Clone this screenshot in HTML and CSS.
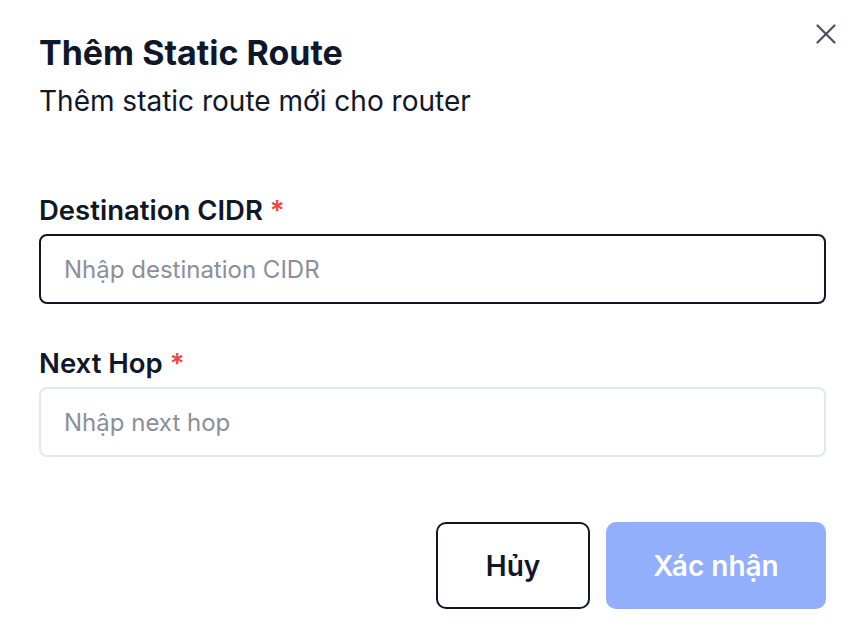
FILE: index.html
```html
<!DOCTYPE html>
<html lang="vi">

<head>
    <meta charset="UTF-8">
    <title>Thêm Static Route</title>
    <meta name="viewport" content="width=device-width, initial-scale=1">
    <link rel="stylesheet" href="styles.css">
</head>

<body>
    <div class="dialog">
        <button class="close" aria-label="Đóng">
            <svg width="20" height="20" viewBox="0 0 20 20" fill="none" stroke="currentColor" stroke-width="2.2"
                stroke-linecap="round">
                <path d="M18.5 1.5 1.5 18.5" />
                <path d="M1.5 1.5l17 17" />
            </svg>
        </button>
        <div class="header">
            <h2 class="title">Thêm Static Route</h2>
            <p class="desc">Thêm static route mới cho router</p>
        </div>
        <form class="form" onsubmit="return false;">
            <div class="field">
                <label class="label" for="cidr">Destination CIDR <span class="req">*</span></label>
                <input class="input focused" type="text" id="cidr" placeholder="Nhập destination CIDR" autofocus>
            </div>
            <div class="field">
                <label class="label" for="hop">Next Hop <span class="req">*</span></label>
                <input class="input" type="text" id="hop" placeholder="Nhập next hop">
            </div>
            <div class="footer">
                <button class="btn btn-outline" type="button">Hủy</button>
                <button class="btn btn-primary" type="submit" disabled>Xác nhận</button>
            </div>
        </form>
    </div>
</body>

</html>
```

FILE: styles.css
```css
* {
    box-sizing: border-box;
}

body {
    margin: 0;
    background: #ffffff;
    font-family: Inter, "Noto Sans", sans-serif;
    color: #0f172a;
}

.dialog {
    position: relative;
    padding: 31px 38px 21px 39px;
}

.close {
    position: absolute;
    top: 24px;
    right: 28px;
    border: none;
    background: none;
    padding: 0;
    width: 20px;
    height: 20px;
    color: #4b5160;
    cursor: pointer;
}

.close svg {
    display: block;
}

.header {
    display: flex;
    flex-direction: column;
    gap: 8px;
}

.title {
    margin: 0;
    font-size: 34px;
    line-height: 44px;
    font-weight: 700;
}

.desc {
    margin: 0;
    font-size: 28px;
    line-height: 36px;
    color: #0f172a;
}

.form {
    display: flex;
    flex-direction: column;
    gap: 43px;
    margin-top: 75px;
}

.field {
    display: flex;
    flex-direction: column;
    gap: 8px;
}

.label {
    font-size: 27.5px;
    line-height: 32px;
    font-weight: 600;
}

.req {
    color: #ef4444;
}

.input {
    width: 100%;
    height: 70px;
    padding: 0 23px;
    font-family: inherit;
    font-size: 24px;
    color: #0f172a;
    border: 2px solid #e2e8f0;
    border-radius: 8px;
    outline: none;
}

.input::placeholder {
    color: #8b8f99;
}

.input.focused,
.input:focus {
    border-color: #0f172a;
}

.footer {
    display: flex;
    justify-content: flex-end;
    gap: 16px;
    margin-top: 22px;
}

.btn {
    height: 87px;
    font-family: inherit;
    font-size: 28px;
    font-weight: 600;
    border-radius: 10px;
    cursor: pointer;
}

.btn-outline {
    width: 154px;
    background: #ffffff;
    color: #0f172a;
    border: 2px solid #0f172a;
}

.btn-primary {
    width: 220px;
    background: #93aefb;
    color: #ffffff;
    border: none;
}
```
